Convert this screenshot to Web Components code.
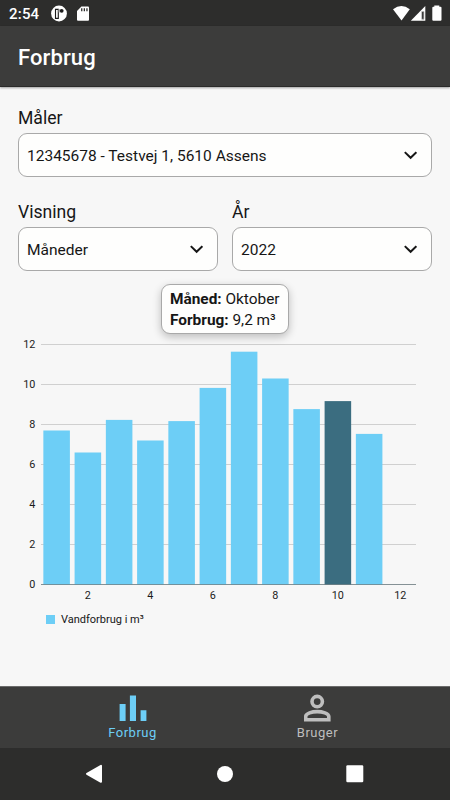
<!DOCTYPE html>
<html lang="da">
  <head>
    <meta charset="UTF-8" />
    <meta name="viewport" content="width=device-width, initial-scale=1.0" />
    <title>Forbrug</title>
    <style>
      body {
        margin: 0;
        font-family: Roboto, 'Liberation Sans', sans-serif;
        color: #161616;
        background: #f7f7f7;
      }
    </style>
  </head>
  <body>
    <template id="water-app">
      <style>
        :host {
          display: flex;
          flex-direction: column;
          height: 800px;
          width: 450px;
          overflow: hidden;
        }
        main {
          flex: 1;
          padding: 20px 18px 0;
        }
        .row {
          display: flex;
          gap: 14px;
          margin-top: 24px;
        }
        .row select-field {
          flex: 1;
        }
      </style>
      <status-bar></status-bar>
      <app-header>Forbrug</app-header>
      <main>
        <select-field label="Måler">12345678 - Testvej 1, 5610 Assens</select-field>
        <div class="row">
          <select-field label="Visning">Måneder</select-field>
          <select-field label="År">2022</select-field>
        </div>
        <usage-chart
          values="7.7,6.6,8.23,7.2,8.17,9.83,11.64,10.3,8.77,9.17,7.53"
          selected="10"
        >
          <chart-tooltip slot="tooltip"></chart-tooltip>
        </usage-chart>
      </main>
      <tab-bar>
        <tab-item active>
          <svg slot="icon" width="28" height="28" viewBox="0 0 28 28" fill="currentColor">
            <path d="M0.6 10h6v17h-6zM10.9 1.4H17V27h-6.1zM21.6 16.3h5.8V27h-5.8z" />
          </svg>
          Forbrug
        </tab-item>
        <tab-item>
          <svg slot="icon" width="28" height="28" viewBox="0 0 28 28" fill="none" stroke="currentColor" stroke-width="3.6">
            <circle cx="13.2" cy="7.6" r="5.2" />
            <path d="M1.7 25.7V22.6C1.7 19.4 8.2 17.6 13.2 17.6S24.8 19.4 24.8 22.6V25.7Z" />
          </svg>
          Bruger
        </tab-item>
      </tab-bar>
      <system-nav></system-nav>
    </template>

    <template id="status-bar">
      <style>
        :host {
          display: flex;
          align-items: center;
          box-sizing: border-box;
          height: 26px;
          padding: 1px 8px 0 9px;
          background: #2d2d2c;
          color: #fff;
        }
        .time {
          width: 42px;
          font-size: 15px;
          font-weight: 500;
          letter-spacing: 0.2px;
        }
        svg {
          display: block;
        }
        .left {
          flex: 1;
        }
      </style>
      <span class="time">2:54</span>
      <svg class="left" height="18" width="60" viewBox="0 0 347 18" preserveAspectRatio="xMinYMid slice">
        <circle cx="8" cy="8.5" r="7.9" fill="#fff" />
        <path d="M4.5 4.4h2.8v9H4.5z" fill="#fff" stroke="#1b1b1b" stroke-width="1.1" />
        <path d="M7.5 4.2h2v3.2H7.5z" fill="#aaa" />
        <circle cx="10.7" cy="5.8" r="1.9" fill="#1b1b1b" />
        <path d="M30.4 1.5H37q1 0 1 1v12.2q0 1-1 1H27q-1 0-1-1V6z" fill="#fff" />
        <path d="M30.1 3.3h1.3v3h-1.3zM32.7 3.3H34v3h-1.3zM35.3 3.3h1.3v3h-1.3z" fill="#2d2d2c" />
      </svg>
      <svg width="50" height="18" viewBox="0 0 50 18" fill="#fff">
        <path d="M1 4.2Q9.5 -2.4 17.8 4.2L9.5 15.5z" />
        <path d="M18.8 15.7L33.3 1v14.7z" />
        <path d="M29.8 6.5h2.1v7.8h-2.1z" fill="#161616" stroke="#bbb" stroke-width=".8" />
        <path d="M42.3 1.7V.5h5v1.2h1.2q1 0 1 1v12q0 1-1 1h-7.2q-1 0-1-1v-12q0-1 1-1z" />
      </svg>
    </template>

    <template id="app-header">
      <style>
        :host {
          display: flex;
          align-items: center;
          box-sizing: border-box;
          height: 61px;
          padding: 3px 18px 0;
          font-size: 22px;
          font-weight: 500;
          letter-spacing: 0.1px;
          color: #fff;
          background: #3c3c3b;
          border-bottom: 1px solid #2b2b2a;
          box-shadow: 0 1px 2px rgba(0, 0, 0, 0.35);
        }
      </style>
      <slot></slot>
    </template>

    <template id="select-field">
      <style>
        :host {
          display: block;
        }
        .label {
          font-size: 17.6px;
          line-height: 22px;
          margin-bottom: 4px;
        }
        .box {
          display: flex;
          align-items: center;
          justify-content: space-between;
          box-sizing: border-box;
          height: 44px;
          padding: 1px 14px 0 8px;
          border: 1px solid #a9a9a9;
          border-radius: 9px;
          background: #fefefd;
          font-size: 15.5px;
        }
      </style>
      <div class="label"></div>
      <div class="box">
        <slot></slot>
        <svg width="14" height="9" viewBox="0 0 14 9" fill="none" stroke="#161616" stroke-width="2">
          <path d="M1.8 1.1L7.6 6.8l5.8-5.7" />
        </svg>
      </div>
    </template>

    <template id="usage-chart">
      <style>
        :host {
          display: block;
          position: relative;
          margin: 59px -18px 0;
        }
        svg {
          display: block;
        }
        text {
          font-size: 10.8px;
          letter-spacing: 0.1px;
          fill: #1c1c1c;
        }
        .legend {
          display: flex;
          align-items: center;
          gap: 6px;
          margin-left: 46px;
          font-size: 11px;
          line-height: 15px;
        }
        .legend i {
          width: 9px;
          height: 9px;
          background: #6dcef6;
        }
        ::slotted(chart-tooltip) {
          position: absolute;
          left: 161px;
          top: -46px;
        }
      </style>
      <svg width="450" height="282"></svg>
      <div class="legend"><i></i>Vandforbrug i m³</div>
      <slot name="tooltip"></slot>
    </template>

    <template id="chart-tooltip">
      <style>
        :host {
          box-sizing: border-box;
          width: 128px;
          height: 50px;
          padding: 4px 8px;
          border: 1px solid #a9a9a9;
          border-radius: 9px;
          background: #fefefd;
          box-shadow: 0 3px 8px rgba(0, 0, 0, 0.24);
          font-size: 15.4px;
          line-height: 20.7px;
          white-space: nowrap;
        }
        b {
          font-weight: 700;
        }
      </style>
      <div><b>Måned:</b> Oktober</div>
      <div><b>Forbrug:</b> 9,2 m³</div>
    </template>

    <template id="tab-bar">
      <style>
        :host {
          display: flex;
          justify-content: center;
          box-sizing: border-box;
          height: 62px;
          padding: 0 40px;
          background: #3c3c3b;
          border-top: 1px solid #6b6b6b;
        }
      </style>
      <slot></slot>
    </template>

    <template id="tab-item">
      <style>
        :host {
          display: flex;
          flex-direction: column;
          align-items: center;
          flex: 1;
          padding-top: 7px;
          font-size: 13px;
          line-height: 15px;
          letter-spacing: 0.5px;
          color: #bebebe;
        }
        :host([active]) {
          color: #6dcef6;
        }
        ::slotted(svg) {
          display: block;
        }
        .text {
          margin-top: 3px;
        }
      </style>
      <slot name="icon"></slot>
      <div class="text"><slot></slot></div>
    </template>

    <template id="system-nav">
      <style>
        :host {
          display: block;
          height: 52px;
          background: #2d2d2c;
        }
        svg {
          display: block;
        }
      </style>
      <svg width="450" height="52" viewBox="0 0 450 52" fill="#fff">
        <path d="M87 25.8L101 17.8v16z" stroke="#fff" stroke-width="2" stroke-linejoin="round" />
        <circle cx="225" cy="26" r="8" />
        <rect x="346.3" y="17.3" width="17" height="17" rx="1.2" />
      </svg>
    </template>

    <water-app></water-app>
  </body>
  <script>
    class BaseElement extends HTMLElement {
      constructor() {
        super()
        const template = document.getElementById(this.localName)
        this.attachShadow({ mode: 'open' }).appendChild(
          template.content.cloneNode(true)
        )
      }
    }

    customElements.define(
      'select-field',
      class extends BaseElement {
        connectedCallback() {
          this.shadowRoot.querySelector('.label').textContent =
            this.getAttribute('label')
        }
      }
    )

    customElements.define(
      'usage-chart',
      class extends BaseElement {
        connectedCallback() {
          const values = this.getAttribute('values').split(',').map(Number)
          const selected = Number(this.getAttribute('selected'))
          const left = 41
          const width = 375
          const base = 254.5
          const unit = 20
          const step = width / 12
          let out = ''

          for (let v = 0; v <= 12; v += 2) {
            const y = base - v * unit
            out += `<path d="M${left} ${y}h${width}" stroke="#d0d0d0"/>`
            out += `<text x="35.5" y="${y + 3.4}" text-anchor="end">${v}</text>`
          }
          values.forEach((value, i) => {
            const x = left + i * step + 2.35
            const fill = i + 1 === selected ? '#3b6d80' : '#6dcef6'
            out += `<rect x="${x}" y="${base - value * unit}" width="26.55" height="${value * unit}" fill="${fill}"/>`
          })
          out += `<path d="M${left} ${base}h${width}" stroke="#53676e" stroke-opacity=".6"/>`
          for (let m = 2; m <= 12; m += 2) {
            const x = left + (m - 0.5) * step
            out += `<text x="${x}" y="269" text-anchor="middle">${m}</text>`
          }
          this.shadowRoot.querySelector('svg').innerHTML = out
        }
      }
    )

    const plain = ['status-bar', 'app-header', 'chart-tooltip', 'tab-item', 'tab-bar', 'system-nav', 'water-app']
    plain.forEach((name) => customElements.define(name, class extends BaseElement {}))
  </script>
</html>
